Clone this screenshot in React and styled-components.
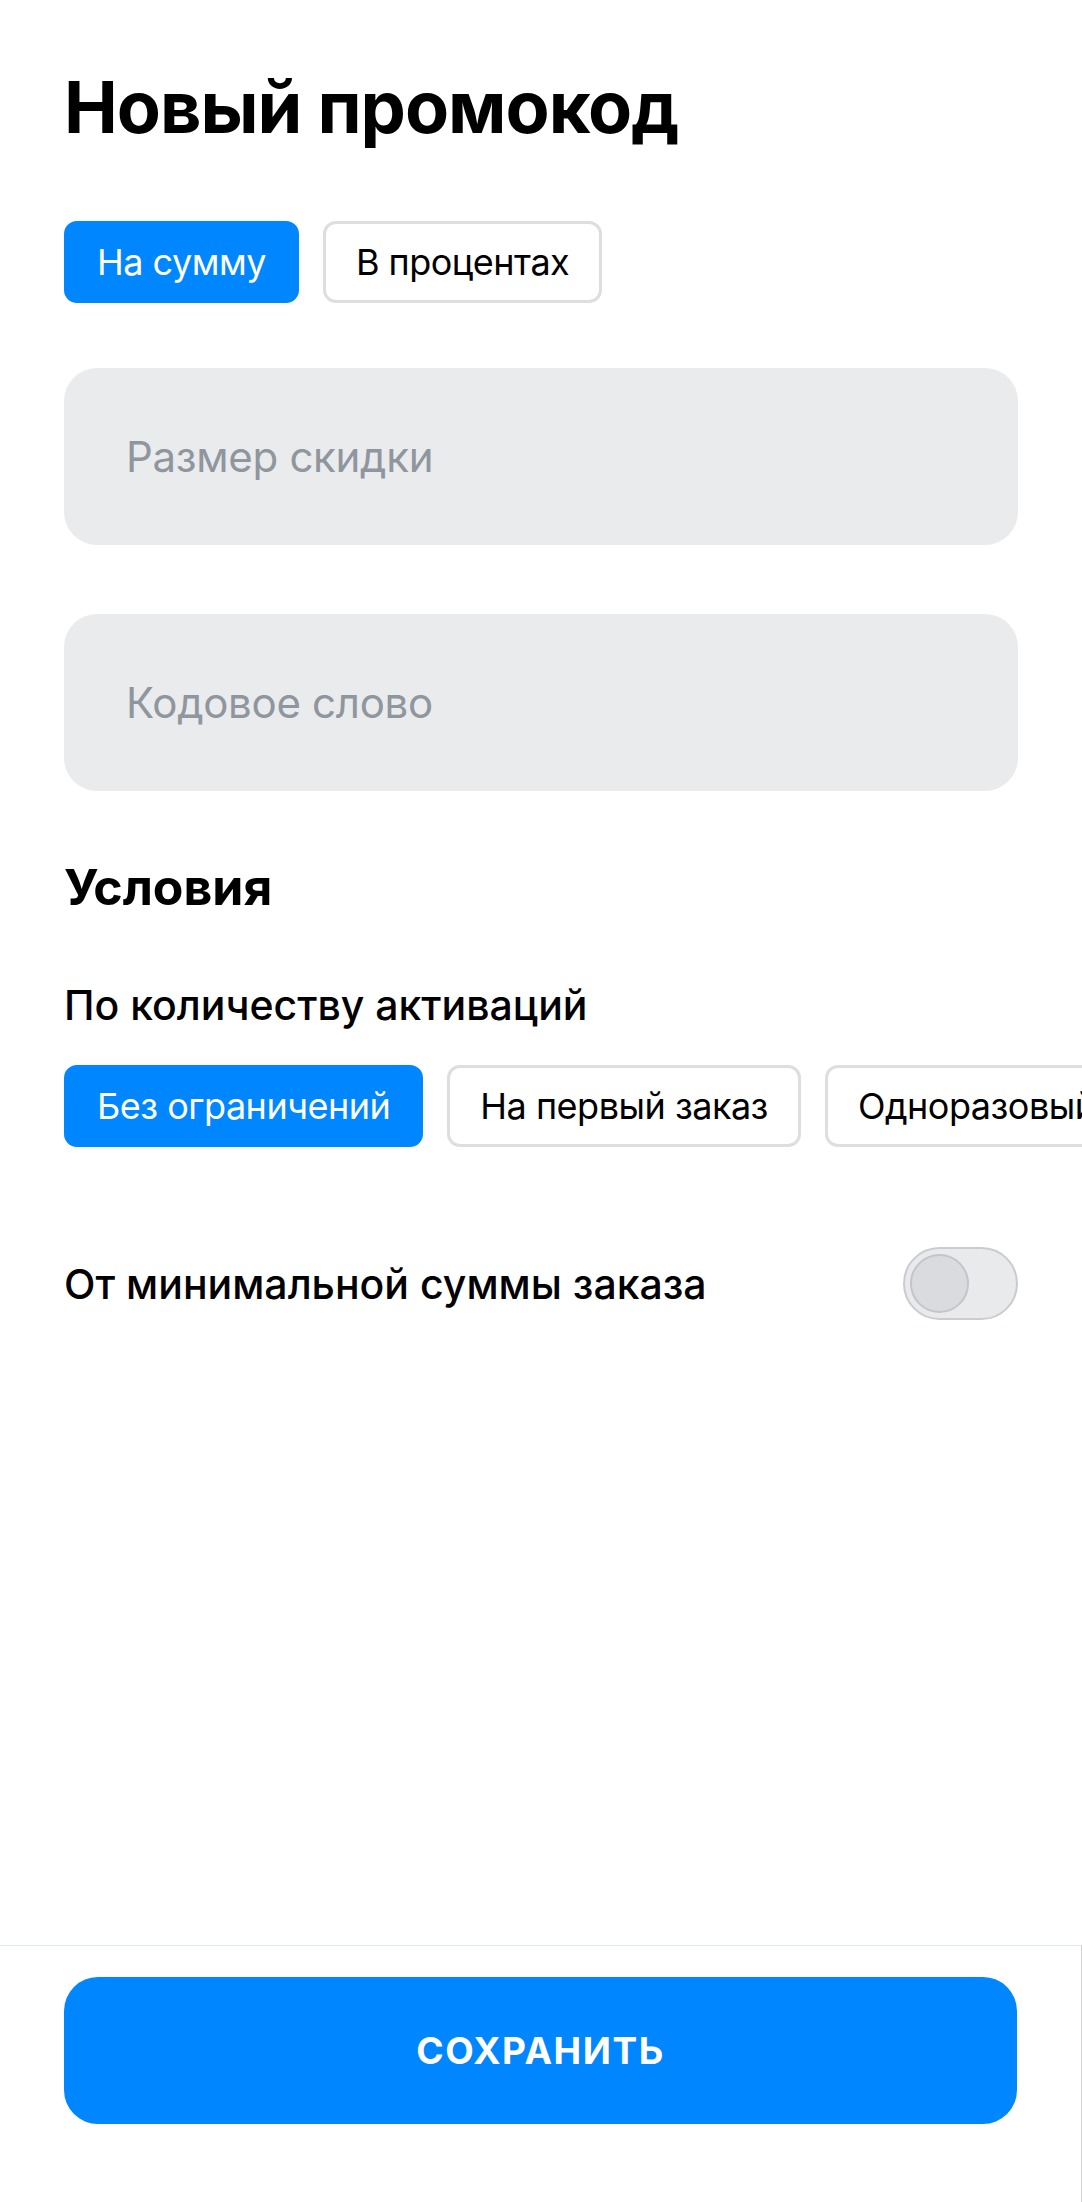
import * as React from "react";
import styled, { createGlobalStyle } from "styled-components";

const GlobalStyle = createGlobalStyle`
  * { box-sizing: border-box; }
  html, body {
    margin: 0;
    padding: 0;
    background: #ffffff;
    font-family: Inter, "Noto Sans", sans-serif;
    color: #000000;
  }
`;

const BLUE = "#0086ff";

const Page = styled.div`
  min-height: 100vh;
  display: flex;
  flex-direction: column;
  overflow: hidden;
`;

const Content = styled.main`
  flex: 1;
  padding: 64px 64px 0;
`;

const Title = styled.h1`
  margin: 0;
  font-size: 72px;
  line-height: 86px;
  font-weight: 700;
  letter-spacing: -1px;
`;

const ChipRow = styled.div`
  display: flex;
  gap: 24px;
  margin-top: ${({ $top }) => $top}px;
  margin-right: -64px;
  overflow: hidden;
`;

const Chip = styled.button`
  flex-shrink: 0;
  height: 82px;
  padding: 0 30px;
  border-radius: 13px;
  border: 3px solid ${({ $active }) => ($active ? BLUE : "#dedee1")};
  background: ${({ $active }) => ($active ? BLUE : "#ffffff")};
  color: ${({ $active }) => ($active ? "#ffffff" : "#000000")};
  font-family: inherit;
  font-size: 36px;
  font-weight: 400;
  letter-spacing: -0.5px;
  white-space: nowrap;
  cursor: pointer;
`;

const Field = styled.input`
  display: block;
  width: 100%;
  height: 177px;
  margin-top: ${({ $top }) => $top}px;
  padding: 0 62px;
  border: none;
  border-radius: 33px;
  background: #eaebed;
  font-family: inherit;
  font-size: 42px;
  letter-spacing: -0.3px;
  color: #000000;
  outline: none;

  &::placeholder {
    color: #8f969e;
  }
`;

const SectionTitle = styled.h2`
  margin: 66px 0 0;
  font-size: 50px;
  line-height: 60px;
  font-weight: 700;
`;

const Label = styled.div`
  margin-top: ${({ $top }) => $top || 0}px;
  font-size: 41px;
  line-height: 50px;
  font-weight: 500;
`;

const ToggleRow = styled.div`
  display: flex;
  align-items: center;
  justify-content: space-between;
  margin-top: 100px;
`;

const Toggle = styled.button`
  position: relative;
  width: 115px;
  height: 73px;
  padding: 0;
  border-radius: 37px;
  border: 2px solid #cbccd0;
  background: #e9eaec;
  cursor: pointer;
`;

const Knob = styled.span`
  position: absolute;
  top: 5px;
  left: 5px;
  width: 59px;
  height: 59px;
  border-radius: 50%;
  border: 2px solid #c4c5c8;
  background: #dadbde;
`;

const Footer = styled.footer`
  padding: 31px 64px 78px;
  border-top: 1px solid #e3e9ef;
  border-right: 1px solid #cfd0d2;
`;

const SaveButton = styled.button`
  display: block;
  width: 100%;
  height: 147px;
  border: none;
  border-radius: 34px;
  background: ${BLUE};
  color: #ffffff;
  font-family: inherit;
  font-size: 37px;
  font-weight: 700;
  letter-spacing: 1.5px;
  text-transform: uppercase;
  cursor: pointer;
`;

export default function App() {
  const [kind, setKind] = React.useState("sum");
  const [limit, setLimit] = React.useState("none");

  const limits = [
    { id: "none", label: "Без ограничений" },
    { id: "first", label: "На первый заказ" },
    { id: "once", label: "Одноразовый" },
  ];

  return (
    <Page>
      <GlobalStyle />
      <Content>
        <Title>Новый промокод</Title>

        <ChipRow $top={71}>
          <Chip $active={kind === "sum"} onClick={() => setKind("sum")}>
            На сумму
          </Chip>
          <Chip $active={kind === "percent"} onClick={() => setKind("percent")}>
            В процентах
          </Chip>
        </ChipRow>

        <Field $top={65} placeholder="Размер скидки" />
        <Field $top={69} placeholder="Кодовое слово" />

        <SectionTitle>Условия</SectionTitle>
        <Label $top={63}>По количеству активаций</Label>

        <ChipRow $top={35}>
          {limits.map((item) => (
            <Chip
              key={item.id}
              $active={limit === item.id}
              onClick={() => setLimit(item.id)}
            >
              {item.label}
            </Chip>
          ))}
        </ChipRow>

        <ToggleRow>
          <Label>От минимальной суммы заказа</Label>
          <Toggle aria-label="toggle">
            <Knob />
          </Toggle>
        </ToggleRow>
      </Content>

      <Footer>
        <SaveButton>Сохранить</SaveButton>
      </Footer>
    </Page>
  );
}
